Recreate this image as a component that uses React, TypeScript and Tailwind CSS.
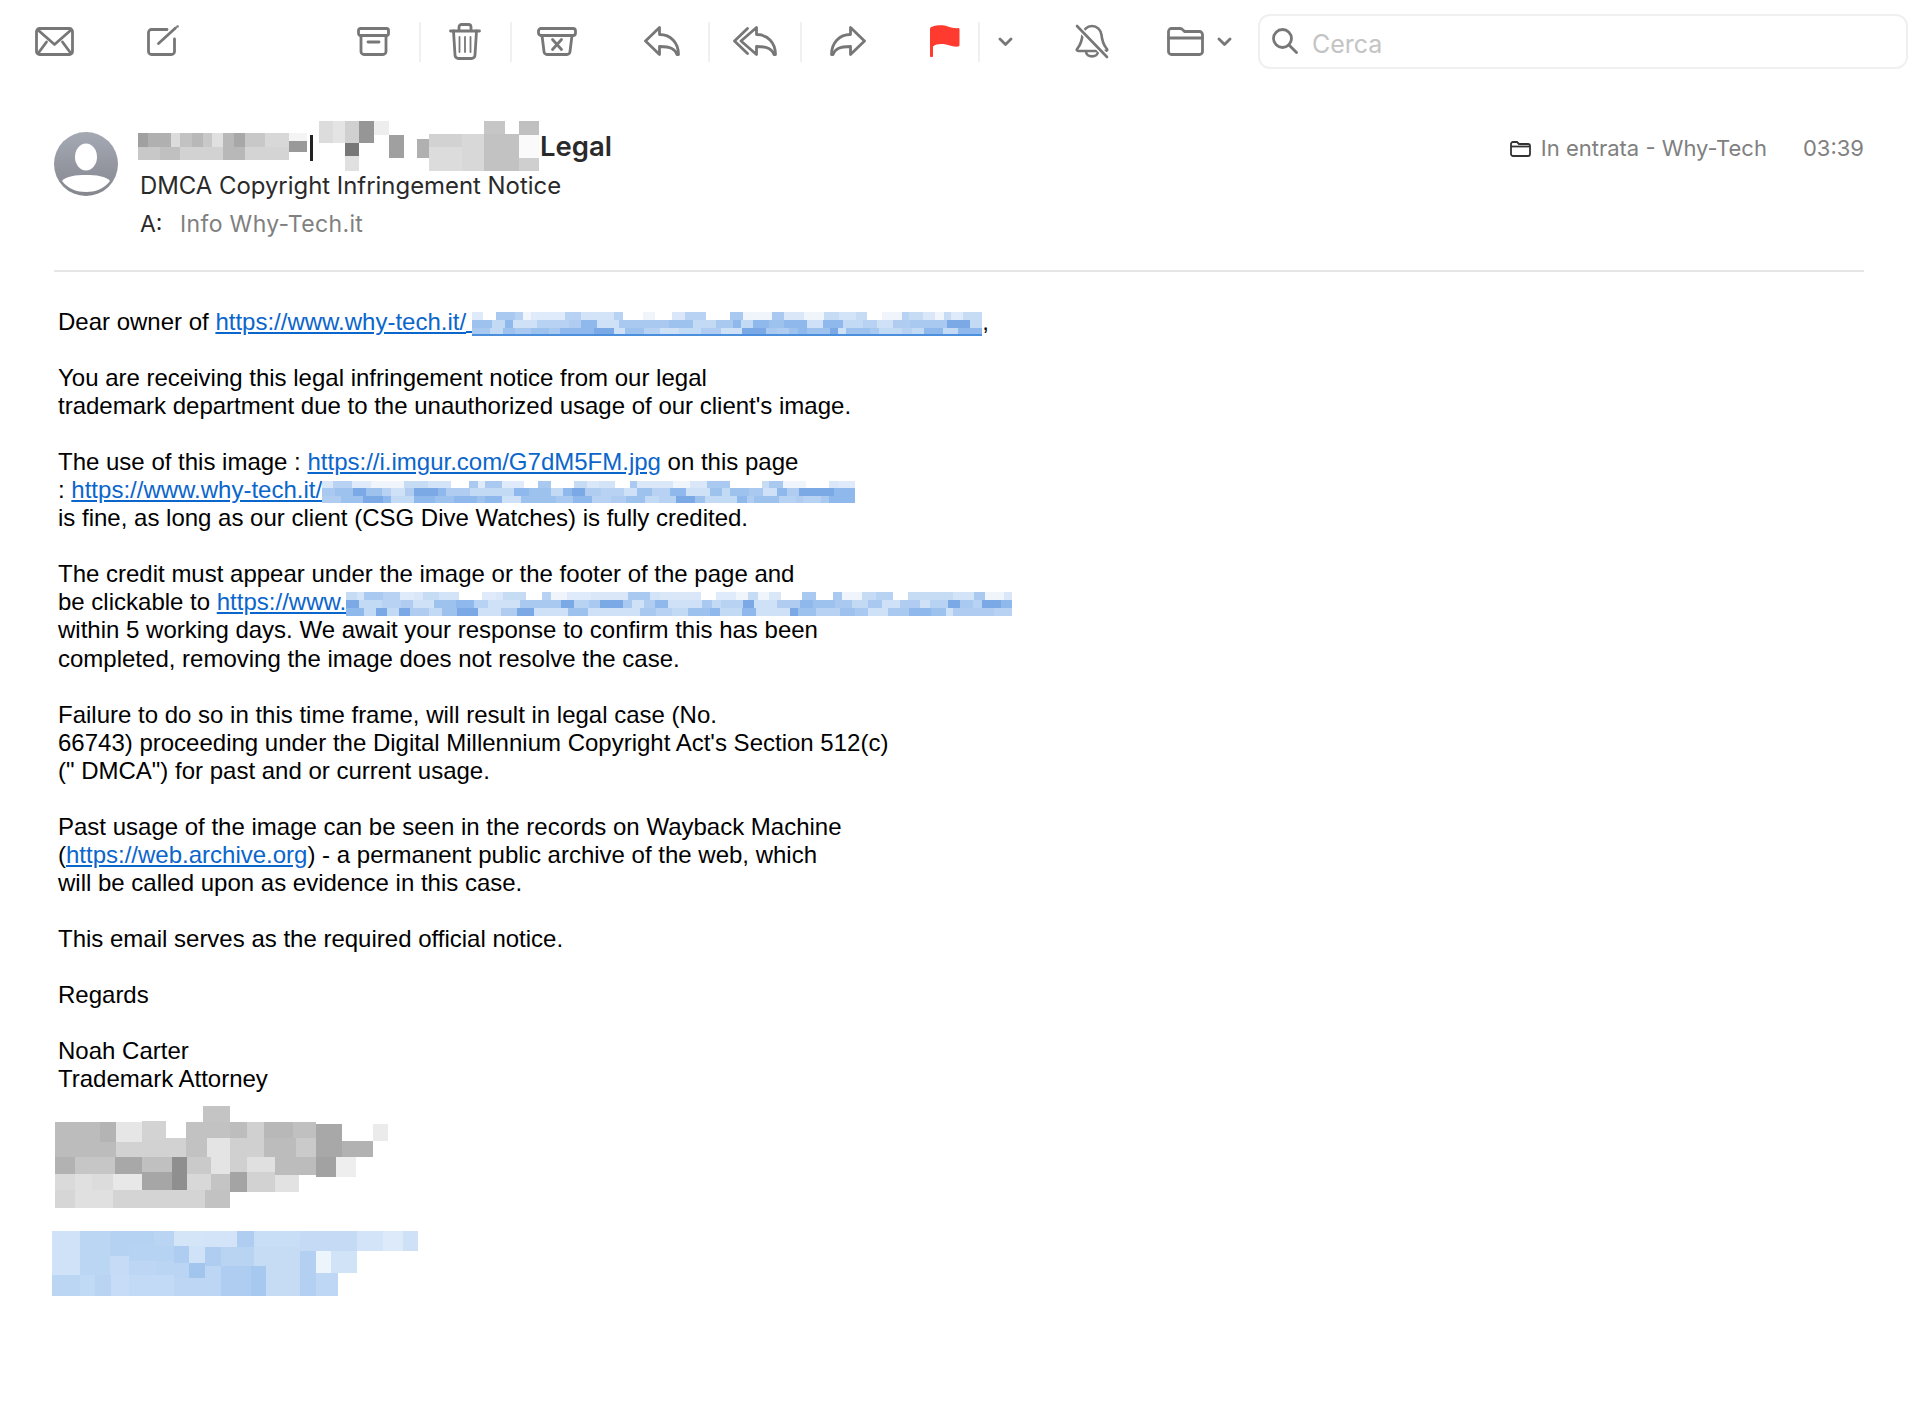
import React from "react";

type R = [number, number, number, number, string];

const S = "#777777";

function Rects({ rects, vb, className }: { rects: R[]; vb: string; className: string }) {
  return (
    <svg viewBox={vb} preserveAspectRatio="none" shapeRendering="crispEdges" className={className}>
      {rects.map((r, i) => (
        <rect key={i} x={r[0]} y={r[1]} width={r[2]} height={r[3]} fill={r[4]} />
      ))}
    </svg>
  );
}

const box = (x1: number, y1: number, x2: number, y2: number, c: string): R => [x1, y1, x2 - x1, y2 - y1, c];

const nameRects: R[] = [
  box(265, 98, 290, 140, "#a0a0a0"), box(290, 98, 345, 140, "#b0b0b0"), box(345, 98, 367, 140, "#dcdcdc"),
  box(367, 98, 398, 140, "#c2c2c2"), box(398, 98, 425, 140, "#b8b8b8"), box(425, 98, 447, 140, "#c8c8c8"),
  box(447, 98, 473, 140, "#e0e0e0"), box(473, 98, 500, 140, "#b8b8b8"), box(500, 98, 528, 140, "#a8a8a8"),
  box(528, 98, 575, 140, "#c8c8c8"), box(575, 98, 635, 140, "#d8d8d8"), box(635, 98, 680, 122, "#f4f4f4"),
  box(265, 140, 318, 180, "#c8c8c8"), box(318, 140, 367, 180, "#c0c0c0"), box(367, 140, 473, 180, "#d2d2d2"),
  box(473, 140, 528, 180, "#b8b8b8"), box(528, 140, 635, 180, "#d4d4d4"), box(635, 122, 680, 156, "#999999"),
  box(687, 105, 695, 182, "#222222"),
  box(708, 62, 743, 128, "#dcdcdc"), box(743, 62, 772, 128, "#e4e4e4"), box(772, 62, 806, 128, "#d0d0d0"),
  box(806, 62, 843, 128, "#969696"), box(843, 62, 880, 104, "#eeeeee"), box(880, 104, 916, 174, "#a0a0a0"),
  box(772, 128, 806, 168, "#777777"), box(772, 168, 806, 212, "#e0e0e0"), box(948, 116, 978, 174, "#b0b0b0"),
  box(978, 100, 1060, 140, "#d2d2d2"), box(978, 140, 1060, 212, "#dcdcdc"), box(1060, 100, 1112, 212, "#d8d8d8"),
  box(1112, 62, 1164, 100, "#c6c6c6"), box(1112, 100, 1198, 212, "#c2c2c2"), box(1198, 62, 1247, 104, "#c0c0c0"),
  box(1198, 104, 1247, 172, "#fafafa"), box(1198, 172, 1247, 212, "#cfcfcf"),
];

const greyRects: R[] = [
  box(520, 45, 600, 95, "#c4c4c4"), box(75, 93, 210, 140, "#bcbcbc"), box(210, 93, 258, 152, "#b4b4b4"),
  box(258, 93, 337, 152, "#e6e6e6"), box(337, 90, 408, 140, "#d3d3d3"), box(468, 93, 600, 140, "#c2c2c2"),
  box(600, 93, 652, 140, "#bdbdbd"), box(652, 93, 702, 140, "#d0d0d0"), box(702, 93, 790, 140, "#b8b8b8"),
  box(790, 93, 860, 140, "#c0c0c0"), box(860, 98, 936, 198, "#a8a8a8"), box(1030, 98, 1075, 150, "#ebebeb"),
  box(75, 140, 210, 198, "#bcbcbc"), box(210, 152, 258, 198, "#bcbcbc"), box(258, 152, 337, 198, "#d2d2d2"),
  box(337, 140, 468, 198, "#d2d2d2"), box(468, 140, 530, 198, "#c2c2c2"), box(530, 140, 600, 198, "#e4e4e4"),
  box(600, 140, 702, 198, "#d0d0d0"), box(702, 140, 800, 198, "#bcbcbc"), box(800, 140, 860, 198, "#cacaca"),
  box(936, 150, 1030, 198, "#b2b2b2"),
  box(75, 198, 135, 248, "#b2b2b2"), box(135, 198, 255, 248, "#c6c6c6"), box(255, 198, 337, 248, "#a8a8a8"),
  box(337, 198, 426, 243, "#c0c0c0"), box(426, 198, 470, 297, "#8f8f8f"), box(470, 198, 543, 248, "#cacaca"),
  box(543, 198, 600, 248, "#e4e4e4"), box(600, 198, 652, 243, "#d0d0d0"), box(652, 198, 735, 243, "#e0e0e0"),
  box(735, 198, 860, 252, "#bcbcbc"), box(860, 198, 918, 258, "#a2a2a2"), box(918, 198, 980, 258, "#eeeeee"),
  box(75, 248, 135, 297, "#dadada"), box(135, 248, 186, 297, "#e0e0e0"), box(186, 248, 249, 297, "#dcdcdc"),
  box(249, 248, 336, 297, "#e8e8e8"), box(336, 243, 426, 297, "#a6a6a6"), box(470, 248, 543, 297, "#d8d8d8"),
  box(543, 248, 600, 297, "#c4c4c4"), box(600, 243, 652, 303, "#a4a4a4"), box(652, 243, 735, 303, "#d2d2d2"),
  box(735, 252, 807, 303, "#e2e2e2"),
  box(75, 297, 135, 350, "#d6d6d6"), box(135, 297, 249, 350, "#e0e0e0"), box(249, 297, 525, 350, "#d4d4d4"),
  box(525, 297, 600, 350, "#c2c2c2"),
];

const blueRects: R[] = [
  box(66, 420, 150, 552, "#d0e2f7"), box(150, 420, 240, 552, "#bbd6f3"), box(240, 420, 372, 495, "#b5d2f2"),
  box(372, 420, 432, 465, "#bad5f3"), box(432, 420, 522, 465, "#d5e5f8"), box(522, 420, 621, 468, "#d3e3f8"),
  box(621, 420, 672, 468, "#aecdf1"), box(672, 420, 810, 468, "#c8def6"), box(810, 420, 984, 480, "#c5dbf5"),
  box(984, 420, 1060, 480, "#d3e3f8"), box(1060, 420, 1120, 480, "#dceaf9"), box(1120, 420, 1165, 480, "#cfe1f7"),
  box(240, 495, 298, 552, "#c5dbf6"), box(298, 465, 432, 510, "#b7d3f3"), box(298, 510, 378, 552, "#bcd6f3"),
  box(378, 510, 477, 560, "#bad5f3"), box(432, 465, 477, 515, "#aecdf1"), box(477, 465, 525, 515, "#d0e2f7"),
  box(477, 515, 525, 560, "#a2c5ee"), box(525, 468, 573, 525, "#aecdf1"), box(525, 525, 573, 615, "#bcd6f3"),
  box(573, 468, 672, 525, "#b9d4f3"), box(672, 468, 810, 615, "#c6dcf5"), box(810, 480, 858, 615, "#b3d0f2"),
  box(858, 480, 906, 545, "#ecf4fc"), box(906, 480, 984, 545, "#d1e3f7"), box(858, 545, 927, 615, "#bdd7f4"),
  box(66, 552, 150, 615, "#bbd6f3"), box(150, 552, 195, 615, "#c0d9f4"), box(195, 552, 243, 615, "#b9d4f3"),
  box(243, 552, 298, 615, "#c7dcf6"), box(298, 552, 432, 615, "#c2daf5"), box(432, 560, 525, 615, "#bcd6f3"),
  box(573, 525, 663, 615, "#aecdf1"), box(663, 525, 708, 615, "#a7c9ef"),
];

function noise(width: number, height: number, seed: number, underline: boolean): R[] {
  const out: R[] = [];
  const light = ["#ffffff", "#f0f5fc", "#dfeafa", "#d3e3f8", "#c6dcf5", "#b7d2f3", "#a9c9f0", "#d9e7f9"];
  const mid = ["#cfe1f7", "#c3daf5", "#b7d2f3", "#a9c9f0", "#9ec2ee", "#8fb8ec", "#7ba9e6", "#b0cdf1"];
  let s = seed;
  const rnd = () => {
    s = (s * 1664525 + 1013904223) % 4294967296;
    return s / 4294967296;
  };
  const rows = 3;
  const rh = height / rows;
  for (let r = 0; r < rows; r++) {
    const pal = r === 0 ? light : mid;
    let x = 0;
    while (x < width) {
      const w = 7 + Math.floor(rnd() * 18);
      const c = pal[Math.floor(rnd() * pal.length)];
      out.push([x, r * rh, Math.min(w, width - x), rh, c]);
      x += w;
    }
  }
  if (underline) out.push([0, height - 2, width, 2, "#4c8fdc"]);
  return out;
}

function Sep({ className }: { className: string }) {
  return <div className={`w-[2px] h-[40px] mt-[2px] bg-[#f0f0f0] ${className}`} />;
}

function Chevron({ className }: { className: string }) {
  return (
    <svg viewBox="0 0 15 9" className={className} fill="none" stroke={S} strokeWidth="2.8" strokeLinecap="round" strokeLinejoin="round">
      <polyline points="2,2 7.5,7.5 13,2" />
    </svg>
  );
}

function Toolbar() {
  const p = { fill: "none", stroke: S, strokeWidth: 2.8, strokeLinecap: "round" as const, strokeLinejoin: "round" as const };
  return (
    <div className="flex items-center h-[82px] pl-[35px]">
      <svg viewBox="0 0 39 29" className="w-[39px] h-[29px]" {...p}>
        <rect x="1.5" y="1.5" width="36" height="26" rx="3" />
        <path d="M3 3 L19.5 17.5 L36 3 M3 26.5 L11.5 15 M36 26.5 L27.5 15" />
      </svg>
      <svg viewBox="0 0 32 32" className="ml-[73px] w-[32px] h-[32px]" {...p}>
        <path d="M20 4.5 H4.5 a3 3 0 0 0 -3 3 V26.5 a3 3 0 0 0 3 3 H24.5 a3 3 0 0 0 3 -3 V14" />
        <path d="M11.5 18.5 L28.5 3" />
        <circle cx="30.5" cy="1.5" r="1.3" fill={S} stroke="none" />
      </svg>
      <svg viewBox="0 0 33 29" className="ml-[178px] w-[33px] h-[29px]" {...p}>
        <rect x="1.5" y="1.5" width="30" height="7" rx="2" />
        <path d="M4 8.5 V24.5 a3 3 0 0 0 3 3 H26 a3 3 0 0 0 3 -3 V8.5" />
        <path d="M11 15 H22" />
      </svg>
      <Sep className="ml-[29px]" />
      <svg viewBox="0 0 32 37" className="ml-[28px] w-[32px] h-[37px]" {...p}>
        <path d="M1.5 8 H30.5 M10 7.5 V4 a2.5 2.5 0 0 1 2.5 -2.5 H19.5 a2.5 2.5 0 0 1 2.5 2.5 V7.5" />
        <path d="M4.5 8 L6 32 a3.5 3.5 0 0 0 3.5 3.5 H22.5 a3.5 3.5 0 0 0 3.5 -3.5 L27.5 8" />
        <path d="M10.5 14 V29 M16 14 V29 M21.5 14 V29" strokeWidth="1.8" />
      </svg>
      <Sep className="ml-[29px]" />
      <svg viewBox="0 0 40 29" className="ml-[25px] w-[40px] h-[29px]" {...p}>
        <rect x="1.5" y="1.5" width="37" height="7" rx="2.5" />
        <path d="M5 8.5 L7 24.5 a3 3 0 0 0 3 3 H30 a3 3 0 0 0 3 -3 L35 8.5" />
        <path d="M15.5 12.5 L24.5 22.5 M24.5 12.5 L15.5 22.5" />
      </svg>
      <svg viewBox="0 0 36 30" className="ml-[67px] w-[36px] h-[30px]" {...p}>
        <path d="M1.5 15 L15.5 1.5 V8.5 C27 8.5 34.5 17 34.5 28.5 H33 C31 23 27 20.5 15.5 20.5 V28.5 Z" />
      </svg>
      <Sep className="ml-[28px]" />
      <svg viewBox="0 0 44 30" className="ml-[23px] w-[44px] h-[30px]" {...p}>
        <path d="M14.5 2.5 L1.5 15 L14.5 27.5" />
        <path d="M8 15 L23.5 1.5 V8.5 C35 8.5 42.5 17 42.5 28.5 H41 C39 23 35 20.5 23.5 20.5 V28.5 Z" />
      </svg>
      <Sep className="ml-[23px]" />
      <svg viewBox="0 0 36 30" className="ml-[28px] w-[36px] h-[30px]" {...p}>
        <path d="M34.5 15 L20.5 1.5 V8.5 C9 8.5 1.5 17 1.5 28.5 H3 C5 23 9 20.5 20.5 20.5 V28.5 Z" />
      </svg>
      <svg viewBox="0 0 30 32" className="ml-[64px] w-[30px] h-[32px]">
        <path fill="#ff3b30" d="M0 4 C0 2.5 1 2 2 1.7 C8 -0.5 14 0 18 1.5 C22 3 26 3.5 28 3 C29 2.8 29.5 3.5 29.5 4.5 V19.5 C29.5 21 29 21.5 28 21.5 C25 22 21 21 16 19.5 C11 18.5 6 19 3 21.5 V31 C3 32 2.5 32 1.5 32 C0.5 32 0 32 0 31 Z" />
      </svg>
      <Sep className="ml-[18px]" />
      <Chevron className="ml-[18px] w-[15px] h-[9px]" />
      <svg viewBox="0 0 34 35" className="ml-[62px] w-[34px] h-[35px]" {...p} strokeWidth={2.6}>
        <path d="M17 2 C12 2 8 6 7.5 11 C7 16 6 20 2.5 24.5 C1 26 2 27 4 27 H30 C32 27 33 26 31.5 24.5 C28 20 27 16 26.5 11 C26 6 22 2 17 2 Z" />
        <path d="M11 27.5 C11 34 23 34 23 27.5" />
        <path d="M2 2 L32 33" stroke="#ffffff" strokeWidth="5.5" />
        <path d="M2 2 L32 33" />
      </svg>
      <svg viewBox="0 0 37 29" className="ml-[58px] w-[37px] h-[29px]" {...p}>
        <path d="M1.5 24.5 V4.5 a3 3 0 0 1 3 -3 H13 a4 4 0 0 1 3 1.5 l1.5 1.5 H32.5 a3 3 0 0 1 3 3 V24.5 a3 3 0 0 1 -3 3 H4.5 a3 3 0 0 1 -3 -3 Z" />
        <path d="M1.5 11 H35.5" />
      </svg>
      <Chevron className="ml-[13px] w-[15px] h-[9px]" />
      <div className="ml-[26px] w-[650px] h-[55px] border-2 border-[#f0f0f0] rounded-[12px] flex items-center pl-[12px]">
        <svg viewBox="0 0 26 26" className="w-[26px] h-[26px]" {...p}>
          <circle cx="10.5" cy="10.5" r="9" />
          <path d="M17 17 L24.5 24.5" />
        </svg>
        <span className="ml-[14px] pt-[8px] text-[25px] text-[#c4c4c4] font-['Inter',sans-serif]">Cerca</span>
      </div>
    </div>
  );
}

function Header() {
  return (
    <div className="ml-[54px] mr-[58px] h-[190px] border-b-2 border-[#e6e6e6] flex justify-between pt-[39px] font-['Inter',sans-serif]">
      <div className="flex">
        <svg viewBox="0 0 64 64" className="w-[64px] h-[64px] mt-[11px]">
          <defs>
            <linearGradient id="av" x1="0" y1="0" x2="0" y2="1">
              <stop offset="0" stopColor="#a5a9b4" />
              <stop offset="1" stopColor="#84878e" />
            </linearGradient>
          </defs>
          <circle cx="32" cy="32" r="32" fill="url(#av)" />
          <ellipse cx="32" cy="25" rx="11" ry="13.5" fill="#ffffff" />
          <path d="M8 49 C12 44 22 43 32 43 C42 43 52 44 56 49 C50 57 41 60 32 60 C23 60 14 57 8 49Z" fill="#ffffff" />
        </svg>
        <div className="ml-[20px]">
          <div className="flex items-end h-[50px] w-[474px]">
            <Rects rects={nameRects} vb="265 62 985 150" className="w-[402px] h-[50px]" />
            <span className="mb-[7px] text-[27.5px] leading-[36px] font-semibold text-[#2a2a2a]">Legal</span>
          </div>
          <div className="-mt-[3px] pl-[2px] text-[23.9px] leading-[36px] text-[#2a2a2a] whitespace-nowrap">DMCA Copyright Infringement Notice</div>
          <div className="mt-[2px] pl-[2px] flex text-[23px] leading-[36px] whitespace-nowrap">
            <span className="w-[40px] text-[#2a2a2a]">A:</span>
            <span className="text-[#808080] tracking-[0.35px]">Info Why-Tech.it</span>
          </div>
        </div>
      </div>
      <div className="flex items-start pt-[9px] text-[22px] leading-[36px] text-[#808080] whitespace-nowrap">
        <svg viewBox="0 0 21 16" className="w-[21px] h-[16px] mt-[11px] mr-[10px]" fill="none" stroke="#333333" strokeWidth="1.8" strokeLinejoin="round">
          <path d="M1 13 V3 a2 2 0 0 1 2 -2 H7 l2 2 H18 a2 2 0 0 1 2 2 V13 a2 2 0 0 1 -2 2 H3 a2 2 0 0 1 -2 -2 Z" />
          <path d="M1 5.5 H20" />
        </svg>
        <span>In entrata - Why-Tech</span>
        <span className="ml-[36px]">03:39</span>
      </div>
    </div>
  );
}

function Link({ children }: { children: React.ReactNode }) {
  return <span className="text-[#0b66cc] underline">{children}</span>;
}

function Bar({ width, height, seed, underline, className }: { width: number; height: number; seed: number; underline?: boolean; className: string }) {
  return <Rects rects={noise(width, height, seed, !!underline)} vb={`0 0 ${width} ${height}`} className={className} />;
}

function Body() {
  const para = "mb-[28.04px]";
  return (
    <div className="pl-[58px] pt-[36px] text-[24px] leading-[28.04px] text-black font-['Liberation_Sans',sans-serif] whitespace-nowrap">
      <p className={para}>
        Dear owner of <Link>https://www.why-tech.it/</Link>
        <span className="inline-block w-[6px] h-[2px] align-[-3px] bg-[#0b66cc]" />
        <Bar width={510} height={24} seed={11} underline className="inline-block w-[510px] h-[24px] align-[-6px]" />,
      </p>
      <p className={para}>
        You are receiving this legal infringement notice from our legal<br />
        trademark department due to the unauthorized usage of our client's image.
      </p>
      <p className={para}>
        The use of this image : <Link>https://i.imgur.com/G7dM5FM.jpg</Link> on this page<br />
        : <Link>https://www.why-tech.it/</Link>
        <Bar width={533} height={22} seed={29} className="inline-block w-[533px] h-[22px] align-[-5px]" /><br />
        is fine, as long as our client (CSG Dive Watches) is fully credited.
      </p>
      <p className={para}>
        The credit must appear under the image or the footer of the page and<br />
        be clickable to <Link>https://www.</Link>
        <Bar width={666} height={24} seed={47} className="inline-block w-[666px] h-[24px] align-[-6px]" /><br />
        within 5 working days. We await your response to confirm this has been<br />
        completed, removing the image does not resolve the case.
      </p>
      <p className={para}>
        Failure to do so in this time frame, will result in legal case (No.<br />
        66743) proceeding under the Digital Millennium Copyright Act's Section 512(c)<br />
        (" DMCA") for past and or current usage.
      </p>
      <p className={para}>
        Past usage of the image can be seen in the records on Wayback Machine<br />
        (<Link>https://web.archive.org</Link>) - a permanent public archive of the web, which<br />
        will be called upon as evidence in this case.
      </p>
      <p className={para}>This email serves as the required official notice.</p>
      <p className={para}>Regards</p>
      <p>
        Noah Carter<br />
        Trademark Attorney
      </p>
      <Rects rects={greyRects} vb="75 45 1000 305" className="block mt-[13px] -ml-[3px] w-[333px] h-[102px]" />
      <Rects rects={blueRects} vb="66 420 1100 195" className="block mt-[23px] -ml-[6px] w-[366px] h-[65px]" />
    </div>
  );
}

export default function App() {
  return (
    <div className="w-[1922px] h-[1418px] bg-white overflow-hidden">
      <Toolbar />
      <Header />
      <Body />
    </div>
  );
}
